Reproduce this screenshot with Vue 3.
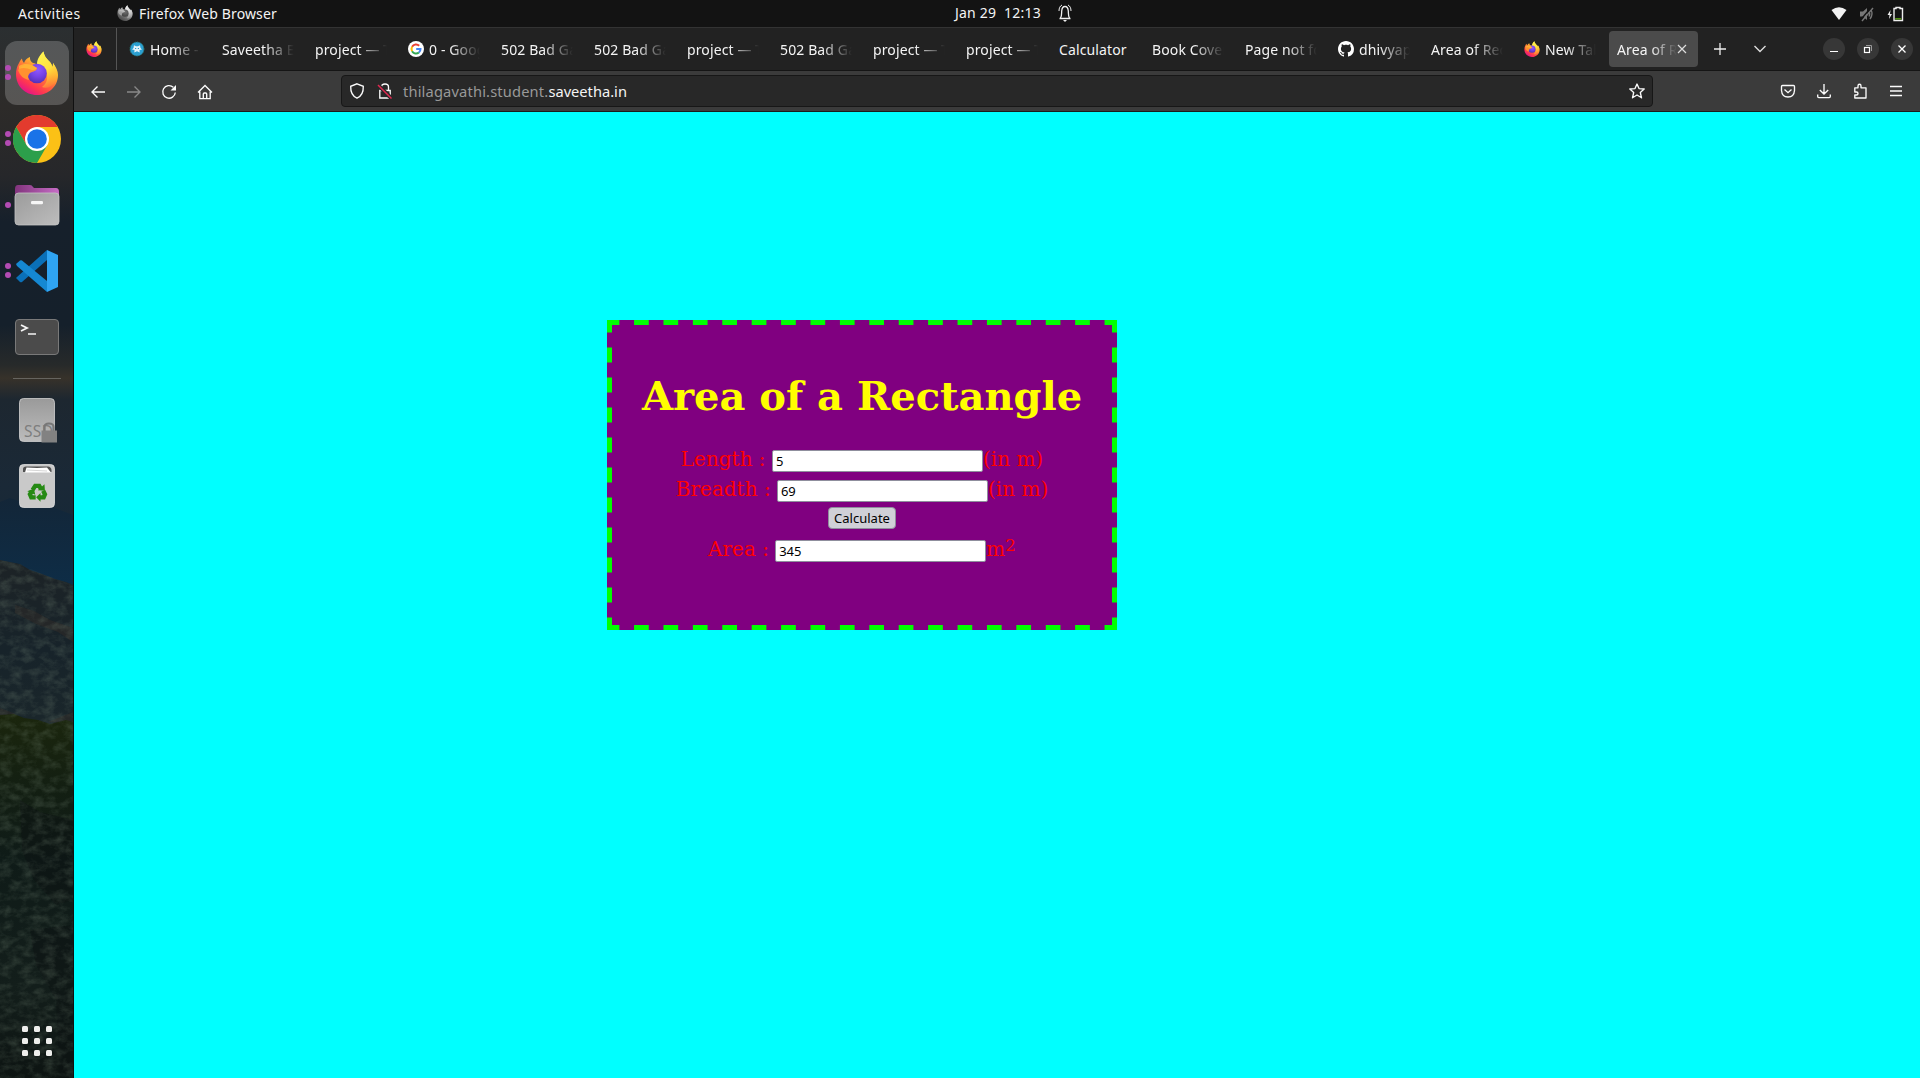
<script setup>
const tabs = [
  { text: 'Home - Sav', icon: 'home' },
  { text: 'Saveetha En' },
  { text: 'project — To' },
  { text: '0 - Google', icon: 'google' },
  { text: '502 Bad Gat' },
  { text: '502 Bad Gat' },
  { text: 'project — To' },
  { text: '502 Bad Gat' },
  { text: 'project — To' },
  { text: 'project — To' },
  { text: 'Calculator', full: true },
  { text: 'Book Cover' },
  { text: 'Page not fou' },
  { text: 'dhivyapri', icon: 'github' },
  { text: 'Area of Rect' },
  { text: 'New Tab', icon: 'firefox' },
  { text: 'Area of Rec', active: true },
]
const rows = [
  { label: 'Length : ', value: '5', unit: '(in m)' },
  { label: 'Breadth : ', value: '69', unit: '(in m)' },
]
</script>

<template>
  <div class="screen">
    <svg width="0" height="0" class="defs">
      <defs>
        <linearGradient id="ffBody" x1="0.8" y1="0.05" x2="0.25" y2="0.95">
          <stop offset="0" stop-color="#fff44f" /><stop offset="0.3" stop-color="#ffbd2e" />
          <stop offset="0.55" stop-color="#ff7139" /><stop offset="0.8" stop-color="#ff3750" /><stop offset="1" stop-color="#e31587" />
        </linearGradient>
        <linearGradient id="ffTail" x1="0.3" y1="0" x2="0.8" y2="1">
          <stop offset="0" stop-color="#fff44f" /><stop offset="0.5" stop-color="#ffe040" /><stop offset="1" stop-color="#ff9a2e" stop-opacity="0.2" />
        </linearGradient>
        <radialGradient id="ffGlobe" cx="0.55" cy="0.3" r="0.75">
          <stop offset="0" stop-color="#9059ff" /><stop offset="0.5" stop-color="#7542e5" /><stop offset="1" stop-color="#4f2fb0" />
        </radialGradient>
        <symbol id="firefox" viewBox="0 0 44 44">
          <path fill="url(#ffBody)" d="M4 12 C5 10 6 8 7 7.500 C7 9 8 11 9 12 C10 9 12 7 15 6 C14.500 8 16 11 18 12 C20 12.500 21 13 23 13 C23 8 25 4 28.500 .5 C29 5 32 8 34 10 C36 12 37 14 37.300 16 C38 15 38 13 38 12 C41 16 43 20 43 24 C43 36 33 44 22 44 C10 44 1 35 1 23 C1 19 2 15 4 12Z" />
          <path fill="url(#ffTail)" d="M22 13 C22 8 25 4 28.500 .5 C29 5 32 8 34 10 C36 12 37 14 37.300 16 C38 15 38 13 38 12 C42 18 43 24 40 31 C37 36 31 38 27 36 C33 32 33 25 31 20 C29 16 26 14 22 13Z" />
          <circle cx="22" cy="22.500" r="9.800" fill="url(#ffGlobe)" />
          <path fill="#ff9130" d="M3 19 C7 14 12 13 17 14 C19 15 20 16 22 17 C22 20 19 20 17 21 C14 22 12 25 14 29 C9 28 5 25 3 19Z" />
          <path fill="#ffbe35" d="M4 15 C9 12 13 13 17 14 C19 15 20 16 22 17 C21 19 18 19 17 19 C12 17 8 16 4 18Z" opacity=".75" />
        </symbol>
        <linearGradient id="grayFace" x1="0" y1="0" x2="1" y2="1"><stop offset="0" stop-color="#9b9b9b" /><stop offset="1" stop-color="#bdbdbd" /></linearGradient>
        <linearGradient id="diskFace" x1="0" y1="0" x2="0" y2="1"><stop offset="0" stop-color="#9a9a9a" /><stop offset="1" stop-color="#bcbcbc" /></linearGradient>
        <linearGradient id="folderBack" x1="0" y1="0" x2="1" y2="0"><stop offset="0" stop-color="#81337c" /><stop offset="1" stop-color="#c66dc6" /></linearGradient>
      </defs>
    </svg>

    <header class="topbar">
      <span class="activities">Activities</span>
      <svg class="app-icon" width="16" height="16"><use href="#firefox" /></svg>
      <span class="app-name">Firefox Web Browser</span>
      <span class="clock">Jan 29&nbsp; 12:13</span>
      <svg class="bell" width="14" height="18" viewBox="0 0 14 18" fill="none" stroke="#eee">
        <path d="M1.500 14.500 H12.500 M2.500 14 C4 11.500 3.500 9 3.700 7 C4 3.500 5 2.500 7 2.500 C9 2.500 10 3.500 10.300 7 C10.500 9 10 11.500 11.500 14" stroke-width="1.300" />
        <path d="M1 7 C1 4 2 2 4 1 M13 7 C13 4 12 2 10 1" /><path d="M5 16 H9 L7 18Z" fill="#eee" stroke="none" />
      </svg>
      <div class="tray">
        <svg width="16" height="14" viewBox="0 0 16 14"><path fill="#f2f2f2" d="M.5 3 Q8 -2.500 15.500 3 L8 13Z" /></svg>
        <svg width="16" height="16" viewBox="0 0 16 16" fill="none" stroke="#777" stroke-width="1.400">
          <path d="M1 5.500 H4 L8 2 V14 L4 10.500 H1Z" fill="#777" stroke="none" /><path d="M10 6 Q11.500 8 10 10.500 M12 4 Q14.500 8 11 13" /><path d="M12.500 1 L1.500 14" stroke="#131313" stroke-width="1.500" /><path d="M14 2 L3 15" />
        </svg>
        <svg width="17" height="16" viewBox="0 0 17 16">
          <path d="M3.500 4 L.5 9 H2.500 L2 13 L5 8 H3Z" fill="#eee" />
          <path d="M9 1.500 H13 V2.500 H15.500 V14.500 H7 V2.500 H9Z" fill="none" stroke="#eee" stroke-width="1.400" /><path d="M8.200 12.800 H14.300" stroke="#5aa113" stroke-width="1.400" />
        </svg>
      </div>
    </header>

    <div class="desktop">
      <aside class="dock">
        <svg class="wallpaper" width="73" height="1051" viewBox="0 27 73 1051" preserveAspectRatio="none">
          <defs>
            <linearGradient id="sky" gradientUnits="userSpaceOnUse" x1="0" y1="27" x2="0" y2="600">
              <stop offset="0" stop-color="#2b2f31" /><stop offset=".14" stop-color="#2d2b29" /><stop offset=".26" stop-color="#26272a" />
              <stop offset=".34" stop-color="#16202b" /><stop offset=".52" stop-color="#15202b" /><stop offset=".59" stop-color="#272a2a" /><stop offset=".613" stop-color="#37322a" />
              <stop offset=".65" stop-color="#1d2730" /><stop offset=".8" stop-color="#1a2937" /><stop offset="1" stop-color="#122838" />
            </linearGradient>
            <linearGradient id="far" x1="0" y1="0" x2="0" y2="1"><stop offset="0" stop-color="#132638" /><stop offset="1" stop-color="#0d2e49" /></linearGradient>
            <linearGradient id="trees" x1="0" y1="0" x2="0" y2="1">
              <stop offset="0" stop-color="#1b260d" /><stop offset=".2" stop-color="#131f12" /><stop offset=".4" stop-color="#0f1b18" /><stop offset=".75" stop-color="#131e1b" /><stop offset="1" stop-color="#0d1412" />
            </linearGradient>
            <linearGradient id="slope" x1="0" y1="0" x2="0" y2="1"><stop offset="0" stop-color="#1d2326" /><stop offset=".5" stop-color="#17232a" /><stop offset="1" stop-color="#1b272b" /></linearGradient>
            <filter id="leaves" x="0" y="0" width="1" height="1">
              <feTurbulence type="fractalNoise" baseFrequency=".09 .13" numOctaves="4" seed="8" />
              <feColorMatrix values="0 0 0 0 .2  0 0 0 0 .27  0 0 0 0 .2  1.800 0 0 0 -.7" />
              <feComposite in2="SourceGraphic" operator="in" />
            </filter>
          </defs>
          <rect y="27" width="73" height="600" fill="url(#sky)" />
          <path fill="url(#far)" d="M0 502 L10 498 L22 502 L36 501 L50 506 L60 510 L73 515 V600 H0Z" />
          <path fill="url(#slope)" d="M0 560 L10 562 L20 564 L30 570 L42 574 L55 579 L66 582 L73 585 V740 H0Z" />
          <path fill="#2b2a28" opacity=".7" d="M15 605 L34 611 L50 620 L73 628 V642 L58 632 L36 624 L15 613Z M48 722 L73 712 V724Z M0 708 L16 714 L0 718Z" />
          <path fill="url(#trees)" d="M0 715 L14 714 L24 718 L38 720 L50 724 L66 720 L73 722 V1078 H0Z" />
          <path fill="#0b1211" opacity=".5" d="M20 800 L40 812 L73 820 V900 L56 905 L34 880 L22 850Z M30 930 L73 925 V1078 H60 L56 1000 L36 965Z" />
          <path filter="url(#leaves)" opacity=".3" d="M0 560 L20 564 L42 574 L73 585 V1078 H0Z" />
        </svg>

        <div class="item selected"><i class="dots two"></i><svg width="44" height="44"><use href="#firefox" /></svg></div>
        <div class="item">
          <i class="dots two"></i>
          <svg width="48" height="48" viewBox="-24 -24 48 48">
            <circle r="24" fill="#fbc116" />
            <path fill="#e33b2e" d="M0 -12 H20.800 A24 24 0 0 0 -20.800 -12 L-10.400 6Z" />
            <path fill="#2c9f4b" d="M-20.800 -12 L-10.400 6 L0 12 L10.400 6 L0 24 A24 24 0 0 1 -20.800 -12Z" />
            <circle r="12" fill="#fff" /><circle r="9.800" fill="#1a73e8" />
          </svg>
        </div>
        <div class="item">
          <i class="dots one"></i>
          <svg width="48" height="48" viewBox="0 0 48 48">
            <path fill="url(#folderBack)" d="M2 8 Q2 4 5 4 H17 Q19 4 20 6 L21 7 H43 Q46 7 46 11 V24 H2Z" />
            <rect x="2" y="12" width="44" height="32" rx="3.500" fill="url(#grayFace)" stroke="#c4c4c4" stroke-width=".8" />
            <rect x="18" y="20" width="12" height="3.200" rx="1.200" fill="#f6f6f6" />
          </svg>
        </div>
        <div class="item">
          <i class="dots two"></i>
          <svg width="42" height="42" viewBox="0 0 42 42">
            <path fill="#0a70b8" d="M0 28 L4 32 Q5 32.500 6 32 L31 10 V0 L1 27Z" />
            <path fill="#1588d2" d="M0 14 L4 10.500 Q5 10 6 10.500 L31 31 V42 L1 16Z" />
            <path fill="#2fa4f2" d="M31 0 L42 5 V37 L31 42Z" />
          </svg>
        </div>
        <div class="item">
          <svg width="48" height="48" viewBox="0 0 48 48">
            <rect x="2.500" y="6.500" width="43" height="35" rx="3.500" fill="#4b4b4b" stroke="#797979" />
            <path d="M8 12 L14 15 L8 18" fill="none" stroke="#f5f5f5" stroke-width="1.800" /><path d="M15 21 H23" stroke="#f5f5f5" stroke-width="1.500" />
          </svg>
        </div>
        <div class="rule"></div>
        <div class="item">
          <svg width="48" height="48" viewBox="0 0 48 48">
            <rect x="6.500" y="2.500" width="35" height="43" rx="4" fill="url(#diskFace)" stroke="#d0d0d0" stroke-width=".8" />
            <text x="11" y="40.500" font-family="Noto Sans, sans-serif" font-size="15.500" textLength="29" fill="#7e7e7e">SSD</text>
            <path d="M31.500 36 V31 Q31.500 27.500 36 27.500 Q40.500 27.500 40.500 31 V36" fill="none" stroke="#777" stroke-width="2.200" /><rect x="28.500" y="34.500" width="15.500" height="12" fill="#828282" />
          </svg>
        </div>
        <div class="item">
          <svg width="48" height="48" viewBox="0 0 48 48">
            <rect x="6.500" y="2.500" width="35" height="43" rx="4" fill="#c9c9c9" stroke="#dedede" stroke-width=".8" />
            <path d="M10 10 V7 Q10 4.500 13 4.500 H35 Q38 4.500 38.500 8 V10Z" fill="#515151" />
            <path d="M12 10.500 L13.500 5.500 L24 6 L34 5.500 L38 10.500Z" fill="#fff" /><path d="M14 8 L34 9" stroke="#aaa" stroke-width=".5" />
            <g transform="translate(24 30.500) scale(.88) translate(-23.500 -31)">
              <g fill="none" stroke="#268a14" stroke-width="5">
                <path d="M18.500 28 L21.500 23.500 H26 L28 27" /><path d="M30.500 29 L32.500 33 L31 36.500 H26.500" /><path d="M22 36.500 H17 L15.500 33 L17.500 30" />
              </g>
              <path fill="#268a14" d="M24.500 28.500 L32.500 29 L32 21.500Z M27.500 31.500 V41.500 L22.500 36.500Z M12.500 29.500 L20 26.500 L21.500 33.500Z" />
            </g>
          </svg>
        </div>
        <div class="apps"><b v-for="n in 9" :key="n"></b></div>
      </aside>

      <main class="browser">
        <div class="tabstrip">
          <div class="pinned"><svg width="16" height="16"><use href="#firefox" /></svg></div>
          <div v-for="(t, i) in tabs" :key="i" class="tab" :class="{ active: t.active }">
            <svg v-if="t.icon === 'home'" class="fav" width="16" height="16" viewBox="0 0 16 16">
              <circle cx="8" cy="8" r="7" fill="#2b9fd0" stroke="#29706c" stroke-dasharray="1.500 1" />
              <path d="M4.500 7 L5 4.200 L7 5.200 H9 L11 4.200 L11.500 7 L13 8.500 L10.500 9 L10.700 11.500 L8 10.300 L5.300 11.500 L5.500 9 L3 8.500Z" fill="#e4f3fa" /><path d="M6 7.500 H7.200 M8.800 7.500 H10" stroke="#2b9fd0" />
            </svg>
            <svg v-else-if="t.icon === 'google'" class="fav" width="16" height="16" viewBox="0 0 16 16">
              <circle cx="8" cy="8" r="8" fill="#fff" />
              <g fill="none" stroke-width="2"><path d="M11.200 4.800 A4.500 4.500 0 0 0 4.100 5.800" stroke="#ea4335" /><path d="M4.100 5.800 A4.500 4.500 0 0 0 4.100 10.200" stroke="#fbbc05" /><path d="M4.100 10.200 A4.500 4.500 0 0 0 10.900 11.500" stroke="#34a853" /><path d="M10.900 11.500 A4.500 4.500 0 0 0 12.500 8 H8.200" stroke="#4285f4" /></g>
            </svg>
            <svg v-else-if="t.icon === 'github'" class="fav" width="16" height="16" viewBox="0 0 16 16">
              <path fill="#fff" d="M8 0C3.580 0 0 3.580 0 8c0 3.540 2.290 6.530 5.470 7.590.4.070.55-.17.55-.38 0-.19-.01-.82-.01-1.490-2.010.37-2.530-.49-2.690-.94-.09-.23-.48-.94-.82-1.130-.28-.15-.68-.52-.01-.53.63-.01 1.080.58 1.230.82.72 1.210 1.870.87 2.330.66.07-.52.28-.87.51-1.070-1.780-.2-3.640-.89-3.640-3.950 0-.87.31-1.590.82-2.150-.08-.2-.36-1.020.08-2.120 0 0 .67-.21 2.200.82.64-.18 1.320-.27 2-.27s1.360.09 2 .27c1.530-1.040 2.200-.82 2.200-.82.44 1.100.16 1.920.08 2.120.51.56.82 1.270.82 2.150 0 3.070-1.870 3.750-3.650 3.950.29.25.54.73.54 1.480 0 1.070-.01 1.930-.01 2.200 0 .21.15.46.55.38A8 8 0 0 0 16 8c0-4.420-3.580-8-8-8Z" />
            </svg>
            <svg v-else-if="t.icon === 'firefox'" class="fav" width="16" height="16"><use href="#firefox" /></svg>
            <span class="label" :class="{ full: t.full }">{{ t.text }}</span>
            <svg v-if="t.active" class="close" width="10" height="10" viewBox="0 0 10 10" stroke="#ddd" stroke-width="1.200"><path d="M1 1 L9 9 M9 1 L1 9" /></svg>
          </div>
          <svg class="plus" width="14" height="14" viewBox="0 0 14 14" stroke="#eee" stroke-width="1.300"><path d="M7 1 V13 M1 7 H13" /></svg>
          <svg class="chev" width="14" height="8" viewBox="0 0 14 8" fill="none" stroke="#ddd" stroke-width="1.400"><path d="M1.500 1 L7 6.500 L12.500 1" /></svg>
          <div class="winbtns">
            <span><svg width="22" height="22" viewBox="0 0 22 22"><path d="M7 13.500 H15" stroke="#fff" /></svg></span>
            <span><svg width="22" height="22" viewBox="0 0 22 22" fill="none"><path d="M9 7.500 H14.500 V13" stroke="#999" /><rect x="7.500" y="9.500" width="5" height="5" stroke="#fff" stroke-width="1.200" /></svg></span>
            <span><svg width="22" height="22" viewBox="0 0 22 22"><path d="M7.500 7.500 L14.500 14.500 M14.500 7.500 L7.500 14.500" stroke="#fff" stroke-width="1.300" /></svg></span>
          </div>
        </div>

        <div class="toolbar">
          <div class="nav">
            <svg width="16" height="16" viewBox="0 0 16 16"><path d="M15 8 H2 M7.500 2.500 L2 8 L7.500 13.500" /></svg>
            <svg class="off" width="16" height="16" viewBox="0 0 16 16"><path d="M1 8 H14 M8.500 2.500 L14 8 L8.500 13.500" /></svg>
            <svg width="16" height="16" viewBox="0 0 16 16"><path d="M12.300 3.300 A6.300 6.300 0 1 0 14.300 8.500" /><path d="M15 1 V6.500 H9.500Z" fill="#fbfbfb" stroke="none" /></svg>
            <svg width="16" height="16" viewBox="0 0 16 16"><path d="M1 8.500 L8 1.500 L15 8.500 M2.800 7.500 V14.600 H13.200 V7.500 M6.300 14.500 V10 Q6.300 9 7.300 9 H8.700 Q9.700 9 9.700 10 V14.500" /></svg>
          </div>
          <div class="urlbar">
            <svg width="16" height="16" viewBox="0 0 16 16"><path d="M8 .8 L14.300 3.300 C14.500 9 12.500 13.300 8 15.200 C3.500 13.300 1.500 9 1.700 3.300Z" /></svg>
            <svg class="lock" width="16" height="16" viewBox="0 0 16 16"><path d="M4.500 7 V4 Q4.500 1 8 1 Q11.500 1 11.500 4 V7 M2.800 7.500 H13.200 V15 H2.800Z" /><path d="M1 2 L14.500 15.500" stroke="#282828" stroke-width="4" /><path d="M1 2 L14.500 15.500" stroke="#e22850" stroke-width="1.500" /></svg>
            <span class="host">thilagavathi.student.</span><span class="domain">saveetha.in</span>
            <svg class="star" width="16" height="16" viewBox="0 0 16 16"><path d="M8 1 L10 5.600 L15.200 6 L11.300 9.500 L12.500 14.800 L8 12 L3.500 14.800 L4.700 9.500 L.8 6 L6 5.600Z" stroke-linejoin="round" /></svg>
          </div>
          <div class="tools">
            <svg width="16" height="16" viewBox="0 0 16 16"><path d="M2.500 2.500 H13.500 Q14.500 2.500 14.500 3.500 V7.500 Q14 14 8 14 Q2 14 1.500 7.500 V3.500 Q1.500 2.500 2.500 2.500Z M4.500 6.500 L8 9.700 L11.500 6.500" /></svg>
            <svg width="16" height="16" viewBox="0 0 16 16"><path d="M8 1 V11 M3.800 7 L8 11 L12.200 7 M1.700 11.500 V13.500 Q1.700 14.600 2.800 14.600 H13.200 Q14.300 14.600 14.300 13.500 V11.500" /></svg>
            <svg width="16" height="16" viewBox="0 0 16 16"><path d="M2.800 9 V4.800 H6 V3 Q6 1.200 7.500 1.200 Q9 1.200 9 3 V4.800 H14 V15 H2.800 V12 H4.500 Q6 12 6 10.500 Q6 9 4.500 9Z" stroke-linejoin="round" /></svg>
            <svg width="16" height="16" viewBox="0 0 16 16"><path d="M2 3.500 H14 M2 8 H14 M2 12.500 H14" /></svg>
          </div>
        </div>

        <section class="page">
          <div class="box">
            <h1>Area of a Rectangle</h1>
            <div v-for="r in rows" :key="r.label" class="row"><span>{{ r.label }}</span><div class="field">{{ r.value }}</div><span>{{ r.unit }}</span></div>
            <div class="row"><button>Calculate</button></div>
            <div class="row"><span>Area : </span><div class="field">345</div><span>m</span><span class="sup">2</span></div>
          </div>
        </section>
      </main>
    </div>
  </div>
</template>

<style>
body { margin: 0; overflow: hidden; }
</style>

<style scoped>
* { box-sizing: border-box; }
svg { display: block; flex: none; }
.defs { position: absolute; }
.screen { width: 1920px; height: 1078px; display: flex; flex-direction: column; overflow: hidden; font-family: "Noto Sans", "Open Sans", sans-serif; font-size: 14px; color: #f4f4f4; }
.topbar { height: 27px; flex: none; background: #131313; display: flex; align-items: center; white-space: nowrap; line-height: 26px; }
.activities { margin-left: 18px; width: 99px; letter-spacing: .42px; }
.app-icon { filter: grayscale(1); margin-top: -2px; }
.app-name { margin-left: 6px; width: 816px; letter-spacing: .13px; }
.clock { width: 103px; letter-spacing: .22px; margin-top: -1px; }
.bell { margin-top: -1px; }
.tray { margin-left: auto; margin-right: 16px; display: flex; align-items: center; gap: 12px; }
.desktop { flex: 1; display: flex; min-height: 0; }
.dock { position: relative; width: 73px; flex: none; display: flex; flex-direction: column; align-items: center; padding-top: 14px; }
.wallpaper { position: absolute; left: 0; top: 0; z-index: -1; }
.item { position: relative; width: 64px; height: 64px; margin-bottom: 2px; border-radius: 12px; display: flex; align-items: center; justify-content: center; flex: none; margin-left: 1px; }
.selected { background: rgba(255, 255, 255, .2); }
.selected svg { margin-top: -1px; }
.dots { position: absolute; left: 0; top: 29px; width: 6px; height: 6px; border-radius: 50%; background: #b34bb3; }
.dots.two { top: 24px; box-shadow: 0 9px #b34bb3; }
.rule { width: 48px; height: 1px; flex: none; margin: 7px 0 9px; background: #66645f; }
.apps { margin-top: auto; margin-bottom: 22px; display: grid; grid-template-columns: repeat(3, 6px); gap: 6px; }
.apps b { height: 6px; border-radius: 1.5px; background: #eeeeec; }
.browser { flex: 1; display: flex; flex-direction: column; border-left: 1px solid #101010; min-width: 0; }
.tabstrip { height: 44px; flex: none; background: #222; border-top: 1px solid #333; border-bottom: 1px solid #151515; display: flex; align-items: center; }
.pinned { width: 43px; height: 42px; flex: none; border-right: 1px solid #555; display: flex; align-items: center; padding-left: 12px; margin-right: 4px; }
.tab { width: 93px; height: 36px; flex: none; display: flex; align-items: center; padding: 0 13px 0 8px; }
.tab.active { width: 89px; background: #4b4b4b; border-radius: 4px; margin-right: 15px; }
.fav { margin-right: 5px; }
.label { flex: 1; min-width: 0; overflow: hidden; white-space: nowrap; line-height: 22px; margin-top: 2px; letter-spacing: .12px; mask-image: linear-gradient(to left, transparent, #000 30px); }
.label.full { mask-image: none; overflow: visible; }
.tab.active .label { mask-image: linear-gradient(to left, transparent, #000 26px); }
.close { margin-right: -2px; }
.plus { margin-right: 26px; }
.winbtns { margin-left: auto; margin-right: 7px; display: flex; gap: 12px; }
.winbtns span { width: 22px; height: 22px; border-radius: 50%; background: #373737; }
.toolbar { height: 41px; flex: none; background: #3b3b3b; border-bottom: 1px solid #1b1b1b; display: flex; align-items: center; }
.toolbar svg { fill: none; stroke: #fbfbfb; stroke-width: 1.35; }
.nav { display: flex; gap: 19.7px; margin-left: 16px; margin-top: 1px; width: 251px; }
.nav .off { opacity: .4; }
.urlbar { width: 1312px; height: 32px; background: #282828; border: 1px solid #171717; border-radius: 4px; display: flex; align-items: center; padding: 0 7px 0 7px; font-size: 14.67px; }
.lock { margin: 0 10px 0 12px; }
.host { color: #999; letter-spacing: .16px; }
.star { margin-left: auto; }
.tools { display: flex; gap: 20px; margin-left: auto; margin-right: 16px; }
.page { flex: 1; background: #0ff; display: flex; align-items: flex-start; }
.box { width: 510px; height: 310px; margin: 208px 0 0 533px; padding-top: 52px; color: #f00; font: 20px/30px "DejaVu Serif", serif;
  background:
    linear-gradient(90deg, #0f0 50%, transparent 50%) -2.35px 0 / 29.412px 5px repeat-x,
    linear-gradient(90deg, #0f0 50%, transparent 50%) -2.35px 100% / 29.412px 5px repeat-x,
    linear-gradient(#0f0 50%, transparent 50%) 0 -2.5px / 5px 30px repeat-y,
    linear-gradient(#0f0 50%, transparent 50%) 100% -2.5px / 5px 30px repeat-y,
    #800080; }
h1 { margin: 0 0 24px; font-size: 40px; line-height: 48px; color: #ff0; text-align: center; white-space: nowrap; }
.row { height: 30px; display: flex; justify-content: center; align-items: flex-start; white-space: pre; }
.field { width: 211px; height: 22px; margin-top: 6px; padding-left: 3px; background: #fff; border: 1px solid #8f8f9d; border-radius: 2px; font: 13px/21px "Noto Sans", sans-serif; letter-spacing: -.15px; color: #000; }
button { width: 68px; height: 22px; margin-top: 3px; padding: 0; border: 1px solid #8f8f9d; border-radius: 4px; background: #d0d0d7; font: 13px/20px "Noto Sans", sans-serif; color: #000; }
.sup { font-size: 16.67px; line-height: 23px; }
</style>
